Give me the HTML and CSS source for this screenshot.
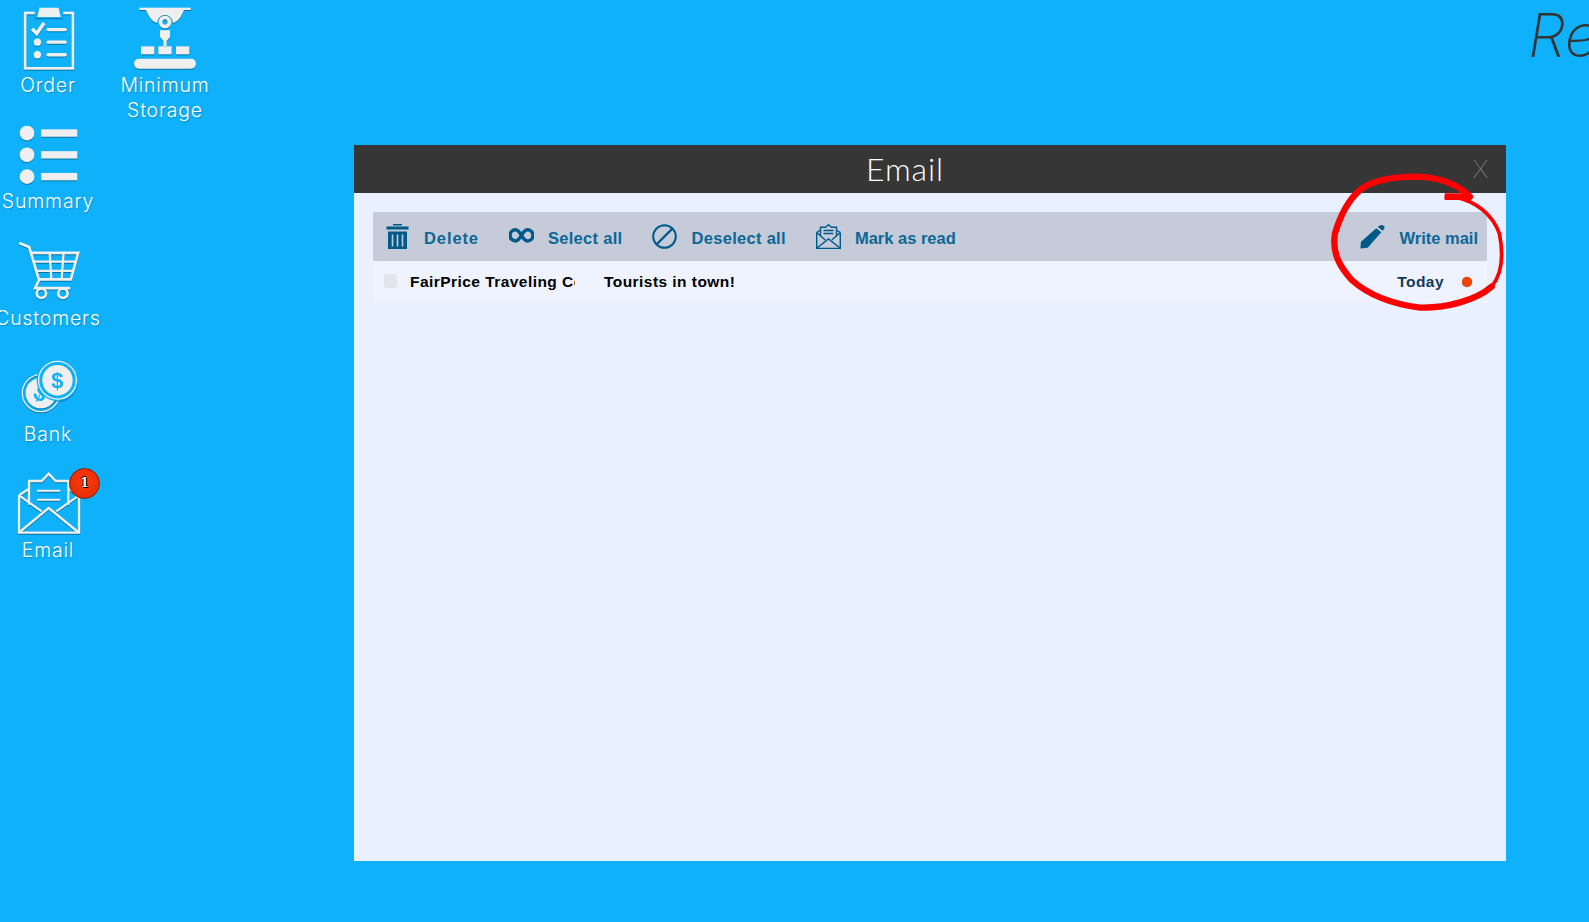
FILE: index.html
```html
<!DOCTYPE html>
<html lang="en">
<head>
<meta charset="utf-8">
<title>Email</title>
<link rel="stylesheet" href="styles.css">
</head>
<body>
<div class="desktop">
  <div class="shortcuts">
    <div class="shortcut-col">
      <a class="shortcut">
        <span class="shortcut-icon">
          <svg class="icon-nudge" width="52" height="63" viewBox="69 18 156 190">
            <rect x="75" y="36" width="144" height="167" fill="none" stroke="#efefef" stroke-width="8"/>
            <path d="M104 30h86v22h-86z" fill="#0fb1fa"/>
            <path d="M112 48l6-28h58l6 28z" fill="#efefef"/>
            <path d="M96 84l14 14 22-32" fill="none" stroke="#efefef" stroke-width="11"/>
            <path d="M144 86h52M144 124h52M144 162h52" stroke="#efefef" stroke-width="10" stroke-linecap="round"/>
            <circle cx="112" cy="124" r="11" fill="#efefef"/>
            <circle cx="112" cy="162" r="11" fill="#efefef"/>
          </svg>
        </span>
        <span class="shortcut-label">Order</span>
      </a>
      <a class="shortcut">
        <span class="shortcut-icon">
          <svg width="59" height="59" viewBox="58 373 176 176">
            <g fill="#efefef">
              <circle cx="82" cy="397" r="22"/><rect x="124" y="386" width="108" height="22"/>
              <circle cx="82" cy="462" r="22"/><rect x="124" y="451" width="108" height="22"/>
              <circle cx="82" cy="527" r="22"/><rect x="124" y="516" width="108" height="22"/>
            </g>
          </svg>
        </span>
        <span class="shortcut-label">Summary</span>
      </a>
      <a class="shortcut">
        <span class="shortcut-icon">
          <svg class="icon-nudge" width="64" height="59" viewBox="52 64 192 178">
            <g fill="none" stroke="#efefef" stroke-width="8">
              <path d="M58 70l30 12 30 100-12 24h106"/>
              <path d="M94 100h142l-22 80H118"/>
              <path d="M102 126h126M110 154h110M150 100l5 80M192 100l-6 80" stroke-width="7"/>
              <circle cx="125" cy="222" r="14"/>
              <circle cx="190" cy="222" r="14"/>
            </g>
          </svg>
        </span>
        <span class="shortcut-label">Customers</span>
      </a>
      <a class="shortcut">
        <span class="shortcut-icon">
          <svg class="icon-nudge" width="57" height="53" viewBox="62 422 172 160">
            <circle cx="122" cy="522" r="56" fill="none" stroke="#efefef" stroke-width="4"/>
            <circle cx="122" cy="522" r="46" fill="#efefef"/>
            <text class="coin-sign" x="122" y="546" text-anchor="middle" transform="rotate(30 122 522)">$</text>
            <circle cx="172" cy="483" r="63" fill="#0fb1fa"/>
            <circle cx="172" cy="483" r="57" fill="none" stroke="#efefef" stroke-width="4"/>
            <circle cx="172" cy="483" r="46" fill="#efefef"/>
            <text class="coin-sign" x="172" y="507" text-anchor="middle">$</text>
          </svg>
        </span>
        <span class="shortcut-label">Bank</span>
      </a>
      <a class="shortcut">
        <span class="shortcut-icon">
          <svg class="icon-nudge" width="64" height="62" viewBox="52 755 192 186">
            <g fill="none" stroke="#efefef" stroke-width="7">
              <path d="M58 825v112h180V825"/>
              <path d="M58 825l68 48M238 825l-68 48M60 935l87-72 88 72"/>
              <path d="M88 853V782h38l21-22 21 22h38v71"/>
              <path d="M58 825l30-20M238 825l-30-20"/>
              <path d="M112 811h70M112 838h70" stroke-width="6"/>
            </g>
          </svg>
          <span class="badge">1</span>
        </span>
        <span class="shortcut-label">Email</span>
      </a>
    </div>
    <div class="shortcut-col">
      <a class="shortcut">
        <span class="shortcut-icon">
          <svg width="62" height="62" viewBox="402 20 186 186">
            <g fill="#efefef">
              <rect x="418" y="22" width="154" height="7"/>
              <path d="M438 29h114c-8 20-20 38-34 38a23 23 0 0 0-46 0c-14 0-26-18-34-38z"/>
              <path d="M495 46a19 19 0 1 0 .01 0zm0 11a8 8 0 1 1-.01 0z"/>
              <path d="M480 90h30v20l-10 12v16h-10v-16l-10-12z"/>
              <rect x="423" y="138" width="40" height="24"/>
              <rect x="475" y="138" width="40" height="24"/>
              <rect x="528" y="138" width="40" height="24"/>
              <rect x="402" y="175" width="186" height="30" rx="15"/>
            </g>
          </svg>
        </span>
        <span class="shortcut-label">Minimum Storage</span>
      </a>
    </div>
  </div>

  <div class="brand-title">Re</div>

  <section class="window">
    <header class="window-bar">
      <h1 class="window-title">Email</h1>
      <span class="window-close">X</span>
    </header>
    <div class="window-body">
      <div class="toolbar">
        <a class="action action-wide">
          <svg class="action-icon" viewBox="0 0 25 25">
            <path d="M8 0h9v1.500H8zM1.500 2.500h22v3h-22zM3 7.500h19V25H3z" fill="#005a89"/>
            <path d="M7.500 10.500v12M12.500 10.500v12M17.500 10.500v12" stroke="#c5cbd8" stroke-width="1.600"/>
          </svg>
          <span class="action-text">Delete</span>
        </a>
        <a class="action action-mid">
          <svg class="action-icon" viewBox="0 0 25 25">
            <path d="M12.500 12.500C10 8 8 6 5.700 6a6.200 6.200 0 0 0 0 12.800c2.300 0 4.300-2 6.800-6.300 2.500-4.500 4.500-6.500 6.800-6.500a6.200 6.200 0 0 1 0 12.800c-2.300 0-4.300-2-6.800-6.300z" fill="none" stroke="#005a89" stroke-width="4" transform="translate(1.600 .6) scale(.87)"/>
          </svg>
          <span class="action-text">Select all</span>
        </a>
        <a class="action action-mid">
          <svg class="action-icon" viewBox="0 0 25 25">
            <circle cx="12.500" cy="12.500" r="11.300" fill="none" stroke="#005a89" stroke-width="2"/>
            <path d="M5 20L20 5" stroke="#005a89" stroke-width="2.400"/>
          </svg>
          <span class="action-text">Deselect all</span>
        </a>
        <a class="action">
          <svg class="action-icon" viewBox="0 0 25 25">
            <g fill="none" stroke="#005a89" stroke-width="1.400">
              <path d="M.7 8.500v16h23.600v-16"/>
              <path d="M.7 8.500l8.500 7.500M24.300 8.500l-8.500 7.500M1 24l11.500-9 11.500 9"/>
              <path d="M4.500 12V3.200h5l3-2.500 3 2.500h5V12"/>
              <path d="M.7 8.500l3.800-2.500M24.300 8.500l-3.800-2.500"/>
            </g>
            <path d="M7.500 6.500h10M7.500 9.500h10" stroke="#005a89" stroke-width="1.400"/>
          </svg>
          <span class="action-text">Mark as read</span>
        </a>
        <a class="action action-end">
          <svg class="action-icon" viewBox="0 0 26 25">
            <path d="M21.500 .8c1-.6 2-.2 3 .6s1.400 1.800.8 2.800l-1.800 2.300-5.200-4.200zM16.900 3.800l5.300 4.200L8 24.300.4 25l.6-7z" fill="#005a89"/>
          </svg>
          <span class="action-text">Write mail</span>
        </a>
      </div>
      <div class="mail-row">
        <span class="mail-check"></span>
        <span class="mail-sender">FairPrice Traveling Co</span>
        <span class="mail-subject">Tourists in town!</span>
        <span class="mail-date">Today</span>
        <span class="mail-dot"></span>
      </div>
    </div>
  </section>

  <svg class="scribble" width="279" height="190" viewBox="0 0 837 570">
    <path d="M480 170C440 130 390 112 320 110C250 110 190 118 150 150C115 180 90 230 75 280C65 340 90 380 125 420C170 460 230 490 330 503C410 505 500 480 545 440" fill="none" stroke="#ff0000" stroke-width="19" stroke-linecap="round"/>
    <path d="M545 440C578 400 580 340 568 280C548 225 500 185 440 172H404" fill="none" stroke="#ff0000" stroke-width="11"/>
    <path d="M404 160h70l10 20h-80z" fill="#ff0000"/>
  </svg>
</div>
</body>
</html>
```

FILE: styles.css
```css
html, body {
  margin: 0;
  height: 100%;
}

body {
  overflow: hidden;
  background: #0fb1fa;
  font-family: "Inter", "Liberation Sans", sans-serif;
}

.desktop {
  position: relative;
  width: 100%;
  height: 100%;
  overflow: hidden;
}

.shortcuts {
  display: flex;
  gap: 21px;
  padding-top: 7px;
}

.shortcut-col {
  display: flex;
  flex-direction: column;
  width: 96px;
}

.shortcut {
  display: flex;
  flex-direction: column;
  align-items: center;
  height: 116.3px;
}

.shortcut-icon {
  position: relative;
  display: flex;
  align-items: center;
  justify-content: center;
  height: 62px;
  flex: none;
}

.shortcut-icon svg {
  filter: drop-shadow(0.5px 1px 0.5px rgba(0, 0, 0, 0.35));
}

.shortcut-icon .icon-nudge {
  margin-left: 2px;
}

.coin-sign {
  font-family: "Liberation Sans", sans-serif;
  font-size: 66px;
  font-weight: 700;
  fill: #0fb1fa;
}

.shortcut-label {
  margin-top: 4px;
  width: 96px;
  display: flex;
  justify-content: center;
  text-align: center;
  color: #fff;
  font-size: 19.5px;
  line-height: 25px;
  font-weight: 300;
  letter-spacing: 0.8px;
  text-shadow: 1px 1px 1px rgba(0, 0, 0, 0.2);
}

.badge {
  position: absolute;
  left: 54px;
  top: -4px;
  width: 29px;
  height: 29px;
  border: 1px solid #8a1c02;
  border-radius: 50%;
  background: radial-gradient(circle at 50% 45%, #ff3a0a, #e02a02);
  color: #fff;
  font-family: "DejaVu Serif", serif;
  font-size: 12px;
  font-weight: 700;
  line-height: 29px;
  text-align: center;
  text-shadow: 1px 1px 0 #000, -1px 0 0 #000, 0 -1px 0 #000;
}

.brand-title {
  position: absolute;
  left: 1528px;
  top: 0;
  color: #333;
  font-family: "Inter", sans-serif;
  font-size: 60px;
  font-style: italic;
  font-weight: 200;
  line-height: 70px;
  white-space: nowrap;
}

.window {
  position: absolute;
  left: 354px;
  top: 145px;
  width: 1152px;
  height: 716px;
  display: flex;
  flex-direction: column;
  background: #e9f0ff;
}

.window-bar {
  display: flex;
  align-items: center;
  height: 48px;
  flex: none;
  background: #363636;
  color: #fff;
}

.window-title {
  flex: 1;
  margin: 0;
  padding-right: 50px;
  text-align: center;
  font-family: "Lato", sans-serif;
  font-size: 32px;
  font-weight: 300;
  letter-spacing: 0.9px;
  line-height: 46px;
}

.window-close {
  position: absolute;
  left: 1119px;
  top: 9px;
  color: #f2f2f2;
  font-family: "Lato", sans-serif;
  font-size: 25px;
  font-weight: 100;
  line-height: 28px;
}

.window-body {
  flex: 1;
  padding: 19px 19px 0;
}

.toolbar {
  display: flex;
  align-items: center;
  gap: 30px;
  height: 49px;
  padding: 0 9px 0 12px;
  background: #c5cbd8;
}

.action {
  display: flex;
  align-items: center;
  gap: 14px;
  color: #0d6796;
  font-family: "Liberation Sans", sans-serif;
  font-size: 16.5px;
  font-weight: 700;
}

.action-text {
  padding-top: 3px;
}

.action-wide {
  letter-spacing: 0.9px;
}

.action-mid {
  letter-spacing: 0.3px;
}

.action-end {
  margin-left: auto;
}

.action-icon {
  display: block;
  width: 25px;
  height: 25px;
  flex: none;
}

.mail-row {
  display: flex;
  align-items: center;
  height: 41px;
  padding: 0 15px 0 11px;
  background: #eff3ff;
  color: #000;
  font-family: "Liberation Sans", sans-serif;
  font-size: 15.5px;
  font-weight: 700;
  letter-spacing: 0.45px;
}

.mail-check {
  width: 13px;
  height: 14px;
  margin-top: -2px;
  border-radius: 2px;
  background: #e1e5ea;
  flex: none;
}

.mail-sender {
  width: 165px;
  margin-left: 13px;
  overflow: hidden;
  white-space: nowrap;
  flex: none;
}

.mail-subject {
  flex: 1;
  margin-left: 29px;
}

.mail-date {
  color: #0f3a5c;
}

.mail-dot {
  width: 10px;
  height: 10px;
  margin-left: 18px;
  border-radius: 50%;
  background: #f04300;
  box-shadow: 0 0 1px rgba(0, 0, 0, 0.6);
  flex: none;
}

.scribble {
  position: absolute;
  left: 1310px;
  top: 140px;
  pointer-events: none;
}
```
